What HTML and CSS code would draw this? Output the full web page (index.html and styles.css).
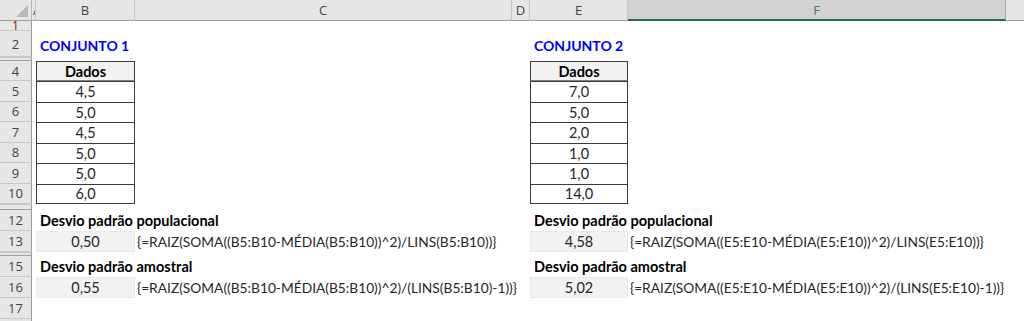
FILE: index.html
```html
<!DOCTYPE html>
<html lang="pt">
<head>
<meta charset="utf-8">
<link rel="stylesheet" href="styles.css">
</head>
<body>
<div class="sheet">
  <div class="row colhead">
    <div class="corner"><span class="tri"></span></div>
    <div class="ch ch-a">A</div>
    <div class="ch">B</div>
    <div class="ch">C</div>
    <div class="ch">D</div>
    <div class="ch">E</div>
    <div class="ch sel">F</div>
    <div class="ch rest"></div>
  </div>

  <div class="row r1"><div class="rh">1</div></div>
  <div class="row r2">
    <div class="rh">2</div><div></div>
    <div class="c title">CONJUNTO 1</div><div></div><div></div>
    <div class="c title">CONJUNTO 2</div>
  </div>
  <div class="row hid"><div class="rh"></div></div>

  <div class="row r4">
    <div class="rh">4</div><div></div>
    <div class="c tb th">Dados</div><div></div><div></div>
    <div class="c tb th">Dados</div>
  </div>
  <div class="row rd"><div class="rh">5</div><div></div><div class="c tb">4,5</div><div></div><div></div><div class="c tb">7,0</div></div>
  <div class="row rd"><div class="rh">6</div><div></div><div class="c tb">5,0</div><div></div><div></div><div class="c tb">5,0</div></div>
  <div class="row rd"><div class="rh">7</div><div></div><div class="c tb">4,5</div><div></div><div></div><div class="c tb">2,0</div></div>
  <div class="row rd"><div class="rh">8</div><div></div><div class="c tb">5,0</div><div></div><div></div><div class="c tb">1,0</div></div>
  <div class="row rd"><div class="rh">9</div><div></div><div class="c tb">5,0</div><div></div><div></div><div class="c tb">1,0</div></div>
  <div class="row rd"><div class="rh">10</div><div></div><div class="c tb last">6,0</div><div></div><div></div><div class="c tb last">14,0</div></div>
  <div class="row hid hid11"><div class="rh"></div></div>

  <div class="row rr">
    <div class="rh">12</div><div></div>
    <div class="c lbl">Desvio padrão populacional</div><div></div><div></div>
    <div class="c lbl">Desvio padrão populacional</div>
  </div>
  <div class="row rr">
    <div class="rh">13</div><div></div>
    <div class="c val">0,50</div>
    <div class="c fx">{=RAIZ(SOMA((B5:B10-MÉDIA(B5:B10))^2)/LINS(B5:B10))}</div><div></div>
    <div class="c val">4,58</div>
    <div class="c fx">{=RAIZ(SOMA((E5:E10-MÉDIA(E5:E10))^2)/LINS(E5:E10))}</div>
  </div>
  <div class="row hid"><div class="rh"></div></div>
  <div class="row rr">
    <div class="rh">15</div><div></div>
    <div class="c lbl">Desvio padrão amostral</div><div></div><div></div>
    <div class="c lbl">Desvio padrão amostral</div>
  </div>
  <div class="row rr">
    <div class="rh">16</div><div></div>
    <div class="c val">0,55</div>
    <div class="c fx">{=RAIZ(SOMA((B5:B10-MÉDIA(B5:B10))^2)/(LINS(B5:B10)-1))}</div><div></div>
    <div class="c val">5,02</div>
    <div class="c fx">{=RAIZ(SOMA((E5:E10-MÉDIA(E5:E10))^2)/(LINS(E5:E10)-1))}</div>
  </div>
  <div class="row rr"><div class="rh">17</div></div>
  <div class="row rr"><div class="rh"></div></div>
</div>
</body>
</html>
```

FILE: styles.css
```css
html, body {
  margin: 0;
  padding: 0;
  background: #ffffff;
}
.sheet {
  width: 1024px;
  height: 321px;
  overflow: hidden;
  font-family: Lato, "Liberation Sans", sans-serif;
  font-size: 14.5px;
  color: #000;
}
.row {
  display: grid;
  grid-template-columns: 32px 4px 99px 377px 18px 98px 378px 18px;
}
.colhead { height: 21px; }
.r1 { height: 10px; }
.r2 { height: 26px; }
.hid { height: 4px; }
.hid11 { height: 6px; }
.r4 { height: 20px; }
.rd { height: 20.5px; }
.rr { height: 21px; }

.corner {
  background: #e6e6e6;
  border-right: 1px solid #b5b5b5;
  border-bottom: 1px solid #9b9b9b;
  position: relative;
}
.tri {
  position: absolute;
  right: 3px;
  bottom: 3px;
  width: 0;
  height: 0;
  border-left: 12px solid transparent;
  border-bottom: 12px solid #b8b8b8;
}
.ch {
  background: #e6e6e6;
  border-right: 1px solid #c6c6c6;
  border-bottom: 1px solid #9b9b9b;
  font-family: "Open Sans", "Noto Sans", sans-serif;
  font-size: 13px;
  color: #444;
  display: flex;
  align-items: center;
  justify-content: center;
  overflow: hidden;
}
.ch-a { justify-content: flex-start; padding-left: 1px; }
.ch.sel {
  background: #d2d2d2;
  color: #4d7a60;
  border-bottom: 2px solid #217346;
  border-right: 1px solid #a8a8a8;
}
.ch.rest { border-right: none; }

.rh {
  background: #e6e6e6;
  border-right: 1px solid #9b9b9b;
  border-bottom: 1px solid #c8c8c8;
  font-family: "Open Sans", "Noto Sans", sans-serif;
  font-size: 13px;
  color: #444;
  display: flex;
  align-items: center;
  justify-content: center;
  box-sizing: border-box;
}
.r1 .rh { font-size: 12px; line-height: 9px; overflow: hidden; align-items: flex-end; color: #6b2424; }
.hid .rh { border-bottom: 1px solid #a0a0a0; border-top: 1px solid #c8c8c8; }

.c {
  display: flex;
  align-items: center;
  white-space: nowrap;
  box-sizing: border-box;
}
.title {
  color: #0000ff;
  font-weight: bold;
  font-size: 14px;
  padding-left: 4px;
  padding-top: 3px;
}
.tb {
  justify-content: center;
  border-left: 1px solid #3a3a3a;
  border-right: 1px solid #3a3a3a;
  border-top: 1px solid #3a3a3a;
  color: #262626;
}
.tb.last { border-bottom: 1px solid #3a3a3a; }
.th {
  background: #f2f2f2;
  font-weight: bold;
  color: #000;
  border-bottom: 1px solid #7f7f7f;
}
.lbl {
  font-weight: bold;
  padding-left: 4px;
  overflow: visible;
}
.val {
  background: #f2f2f2;
  justify-content: center;
  color: #262626;
  border: 1px dotted #e0e0e0;
}
.fx {
  padding-left: 2px;
  font-size: 13.75px;
  color: #262626;
}
```
